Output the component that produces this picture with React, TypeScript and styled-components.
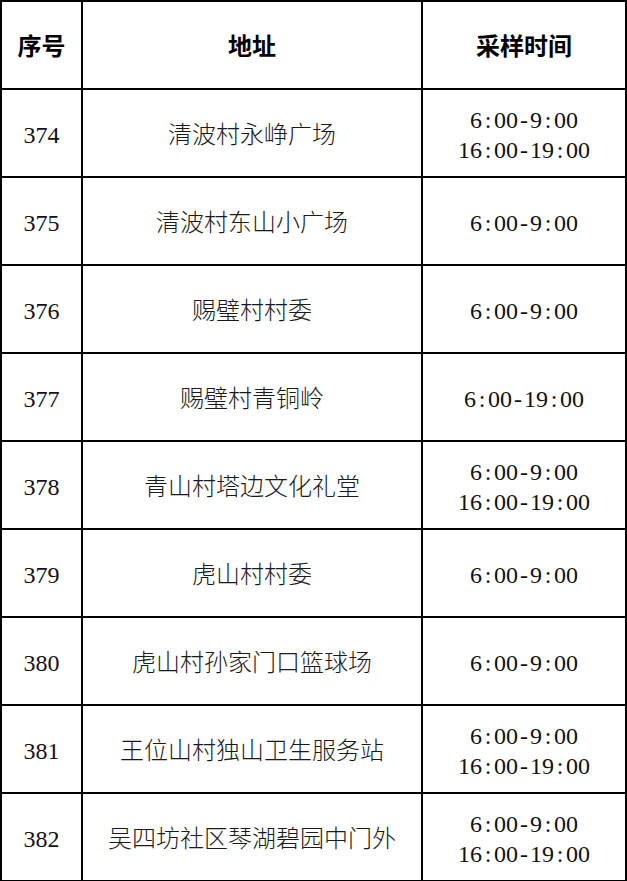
import React from "react";
import styled, { createGlobalStyle } from "styled-components";

const GlobalStyle = createGlobalStyle`
  html, body {
    margin: 0;
    padding: 0;
    background: #ffffff;
  }
  body {
    font-family: "Liberation Serif", "Noto Sans CJK SC", serif;
    color: #000;
  }
`;

const Table = styled.div`
  display: grid;
  grid-template-columns: 81px 340px 204px;
  grid-auto-rows: 88px;
  width: 627px;
  box-sizing: border-box;
  border-top: 2px solid #000;
  border-left: 2px solid #000;
`;

const Cell = styled.div<{ $head?: boolean }>`
  box-sizing: border-box;
  border-right: 2px solid #000;
  border-bottom: 2px solid #000;
  display: flex;
  flex-direction: column;
  align-items: center;
  justify-content: center;
  text-align: center;
  font-size: 24px;
  line-height: 30px;
  font-family: "Noto Sans CJK SC", sans-serif;
  font-weight: ${(p) => (p.$head ? 700 : 300)};
  color: ${(p) => (p.$head ? "#000" : "#1a1a1a")};
`;

const Num = styled.span`
  padding-top: 4px;
  font-family: "Liberation Serif", serif;
  font-size: 24px;
  font-weight: 400;
  color: #111;
`;

const Times = styled.div`
  padding-top: 4px;
  display: flex;
  flex-direction: column;
  align-items: center;
`;

const TimeLine = styled.div`
  display: flex;
  font-family: "Liberation Serif", serif;
  font-size: 24px;
  font-weight: 400;
  line-height: 30px;
  color: #111;
`;

const Ch = styled.span`
  display: inline-block;
  width: 12px;
  text-align: center;
`;

const rows: { no: string; addr: string; times: string[] }[] = [
  { no: "374", addr: "清波村永峥广场", times: ["6:00-9:00", "16:00-19:00"] },
  { no: "375", addr: "清波村东山小广场", times: ["6:00-9:00"] },
  { no: "376", addr: "赐璧村村委", times: ["6:00-9:00"] },
  { no: "377", addr: "赐璧村青铜岭", times: ["6:00-19:00"] },
  { no: "378", addr: "青山村塔边文化礼堂", times: ["6:00-9:00", "16:00-19:00"] },
  { no: "379", addr: "虎山村村委", times: ["6:00-9:00"] },
  { no: "380", addr: "虎山村孙家门口篮球场", times: ["6:00-9:00"] },
  { no: "381", addr: "王位山村独山卫生服务站", times: ["6:00-9:00", "16:00-19:00"] },
  { no: "382", addr: "吴四坊社区琴湖碧园中门外", times: ["6:00-9:00", "16:00-19:00"] },
];

const Mono: React.FC<{ text: string }> = ({ text }) => (
  <TimeLine>
    {text.split("").map((c, i) => (
      <Ch key={i}>{c}</Ch>
    ))}
  </TimeLine>
);

export default function App() {
  return (
    <>
      <GlobalStyle />
      <Table>
        <Cell $head>序号</Cell>
        <Cell $head>地址</Cell>
        <Cell $head>采样时间</Cell>
        {rows.map((r) => (
          <React.Fragment key={r.no}>
            <Cell>
              <Num>{r.no}</Num>
            </Cell>
            <Cell>{r.addr}</Cell>
            <Cell>
              <Times>
                {r.times.map((t) => (
                  <Mono key={t} text={t} />
                ))}
              </Times>
            </Cell>
          </React.Fragment>
        ))}
      </Table>
    </>
  );
}
